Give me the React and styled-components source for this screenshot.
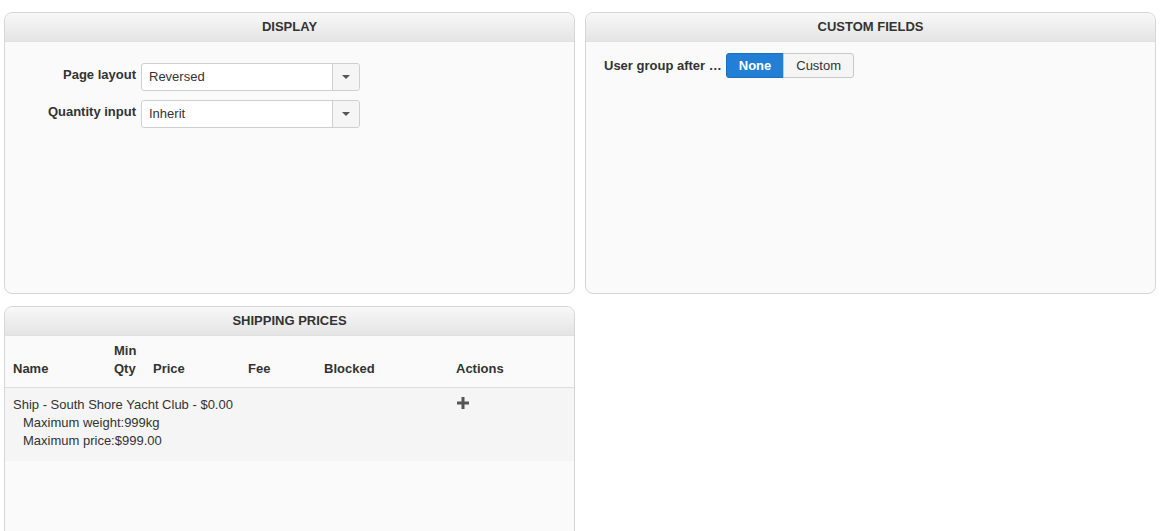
import React from 'react';
import styled, { createGlobalStyle } from 'styled-components';

const GlobalStyle = createGlobalStyle`
  html, body {
    margin: 0;
    padding: 0;
    background: #fff;
    font-family: "Liberation Sans", Arial, sans-serif;
    font-size: 13px;
    color: #333;
  }
`;

const Page = styled.div`
  display: grid;
  grid-template-columns: 571px 571px;
  grid-template-rows: 282px 260px;
  column-gap: 10px;
  row-gap: 12px;
  padding: 12px 0 0 4px;
  height: 519px;
  overflow: hidden;
`;

const Panel = styled.section`
  display: flex;
  flex-direction: column;
  background: #fafafa;
  border: 1px solid #d6d6d6;
  border-radius: 8px;
  overflow: hidden;
`;

const PanelHeader = styled.header`
  height: 28px;
  line-height: 28px;
  text-align: center;
  font-weight: bold;
  text-transform: uppercase;
  color: #333;
  background: linear-gradient(to bottom, #f8f8f8 0%, #e4e4e4 100%);
  border-bottom: 1px solid #e0e0e0;
`;

const PanelBody = styled.div`
  padding: ${(p) => p.$pad || '21px 0 0 0'};
  flex: 1;
`;

const FormRow = styled.div`
  display: flex;
  align-items: flex-start;
  margin-bottom: 9px;
`;

const Label = styled.label`
  width: 131px;
  text-align: right;
  font-weight: bold;
  padding-top: 4px;
  padding-right: 5px;
  color: #333;
`;

const SelectBox = styled.div`
  display: flex;
  width: 217px;
  height: 26px;
  background: #fff;
  border: 1px solid #cfcfcf;
  border-radius: 3px;
  box-sizing: content-box;
`;

const SelectValue = styled.span`
  flex: 1;
  padding-left: 7px;
  line-height: 26px;
`;

const SelectCaret = styled.span`
  width: 26px;
  border-left: 1px solid #cfcfcf;
  background: #f5f5f5;
  border-radius: 0 3px 3px 0;
  display: flex;
  align-items: center;
  justify-content: center;
  &::after {
    content: '';
    border-left: 4px solid transparent;
    border-right: 4px solid transparent;
    border-top: 4px solid #555;
  }
`;

const InlineRow = styled.div`
  display: flex;
  align-items: center;
  padding: 11px 0 0 18px;
`;

const InlineLabel = styled.span`
  font-weight: bold;
  margin-right: 4px;
`;

const ButtonGroup = styled.div`
  display: flex;
`;

const ToggleButton = styled.button`
  font-family: inherit;
  font-size: 13px;
  height: 25px;
  padding: 0 ${(p) => (p.$active ? '12px' : '12px')};
  border: 1px solid ${(p) => (p.$active ? '#1b6fbd' : '#c8c8c8')};
  background: ${(p) => (p.$active ? '#2180d5' : '#f5f5f5')};
  color: ${(p) => (p.$active ? '#fff' : '#333')};
  font-weight: ${(p) => (p.$active ? 'bold' : 'normal')};
  border-radius: ${(p) => (p.$first ? '3px 0 0 3px' : '0 3px 3px 0')};
  margin-left: ${(p) => (p.$first ? '0' : '-1px')};
`;

const Table = styled.table`
  width: 100%;
  border-collapse: collapse;
  font-size: 13px;
`;

const Th = styled.th`
  text-align: left;
  vertical-align: bottom;
  font-weight: bold;
  padding: 0 8px 9px 8px;
  line-height: 18px;
  background: #fafafa;
  border-bottom: 1px solid #ddd;
  width: ${(p) => p.$w || 'auto'};
`;

const Td = styled.td`
  vertical-align: top;
  padding: 8px 8px 11px 8px;
  line-height: 18px;
  background: #f5f5f5;
`;

const SubLine = styled.div`
  padding-left: 10px;
`;

const PlusIcon = () => (
  <svg width="12" height="12" viewBox="0 0 12 12" style={{ display: 'block', margin: '1px 0 0 1px' }}>
    <path d="M4.5 0h3v4.5H12v3H7.5V12h-3V7.5H0v-3h4.5z" fill="#555" />
  </svg>
);

const App = () => {
  return (
    <>
      <GlobalStyle />
      <Page>
        <Panel>
          <PanelHeader>Display</PanelHeader>
          <PanelBody>
            <FormRow>
              <Label>Page layout</Label>
              <SelectBox>
                <SelectValue>Reversed</SelectValue>
                <SelectCaret />
              </SelectBox>
            </FormRow>
            <FormRow>
              <Label>Quantity input</Label>
              <SelectBox>
                <SelectValue>Inherit</SelectValue>
                <SelectCaret />
              </SelectBox>
            </FormRow>
          </PanelBody>
        </Panel>

        <Panel>
          <PanelHeader>Custom fields</PanelHeader>
          <InlineRow>
            <InlineLabel>User group after …</InlineLabel>
            <ButtonGroup>
              <ToggleButton $active $first>None</ToggleButton>
              <ToggleButton>Custom</ToggleButton>
            </ButtonGroup>
          </InlineRow>
        </Panel>

        <Panel>
          <PanelHeader>Shipping prices</PanelHeader>
          <PanelBody $pad="6px 0 0 0">
            <Table>
              <thead>
                <tr>
                  <Th $w="85px">Name</Th>
                  <Th $w="23px">Min<br />Qty</Th>
                  <Th $w="79px">Price</Th>
                  <Th $w="60px">Fee</Th>
                  <Th $w="116px">Blocked</Th>
                  <Th>Actions</Th>
                </tr>
              </thead>
              <tbody>
                <tr>
                  <Td colSpan={5}>
                    <div>Ship - South Shore Yacht Club - $0.00</div>
                    <SubLine>Maximum weight:999kg</SubLine>
                    <SubLine>Maximum price:$999.00</SubLine>
                  </Td>
                  <Td>
                    <PlusIcon />
                  </Td>
                </tr>
              </tbody>
            </Table>
          </PanelBody>
        </Panel>
      </Page>
    </>
  );
};

export default App;
